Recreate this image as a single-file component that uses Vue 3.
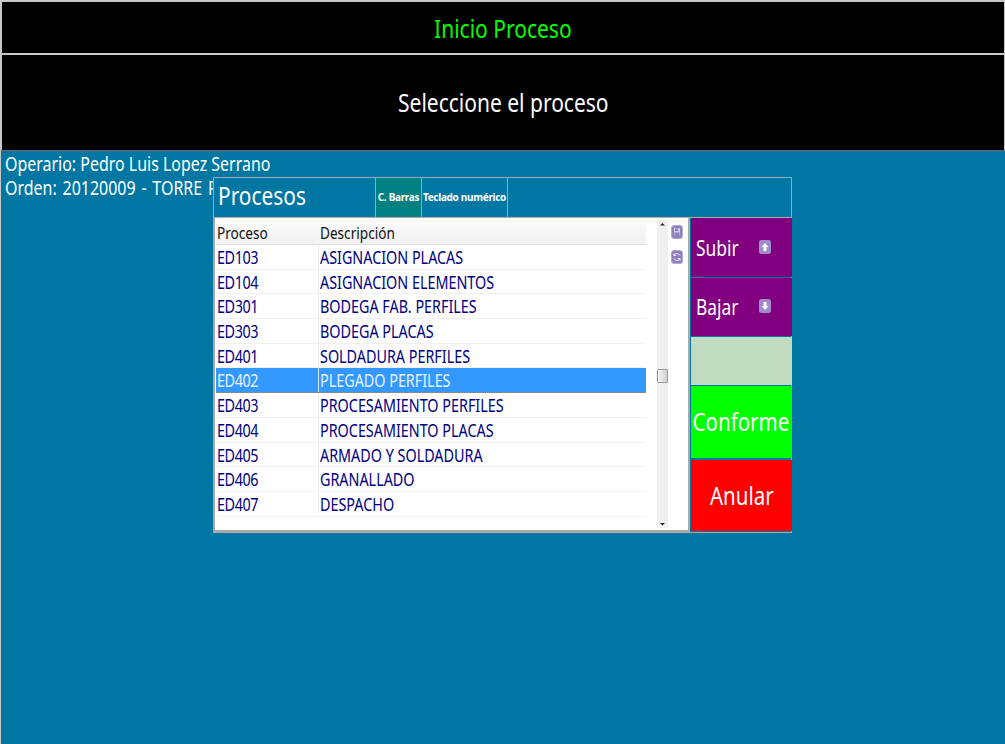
<script setup>
const rows = [
  ['ED103', 'ASIGNACION PLACAS'],
  ['ED104', 'ASIGNACION ELEMENTOS'],
  ['ED301', 'BODEGA FAB. PERFILES'],
  ['ED303', 'BODEGA PLACAS'],
  ['ED401', 'SOLDADURA PERFILES'],
  ['ED402', 'PLEGADO PERFILES'],
  ['ED403', 'PROCESAMIENTO PERFILES'],
  ['ED404', 'PROCESAMIENTO PLACAS'],
  ['ED405', 'ARMADO Y SOLDADURA'],
  ['ED406', 'GRANALLADO'],
  ['ED407', 'DESPACHO'],
]
</script>

<template>
  <div class="screen">
    <header class="title"><span class="t">Inicio Proceso</span></header>
    <div class="prompt"><span class="t">Seleccione el proceso</span></div>
    <main class="body">
      <div class="info"><span class="t">Operario: Pedro Luis Lopez Serrano</span></div>
      <div class="info clip"><span class="t">Orden: 20120009 - TORRE P</span></div>

      <section class="dialog">
        <div class="dialog-head">
          <div class="dialog-title"><span class="t">Procesos</span></div>
          <div class="tab tab-on">C. Barras</div>
          <div class="tab tab-off">Teclado numérico</div>
        </div>
        <div class="dialog-main">
          <div class="panel">
            <div class="table">
              <div class="thead">
                <span class="c1"><span class="t">Proceso</span></span>
                <span class="c2"><span class="t">Descripción</span></span>
              </div>
              <div
                v-for="r in rows"
                :key="r[0]"
                class="row"
                :class="{ selected: r[0] === 'ED402' }"
              >
                <span class="c1"><span class="t">{{ r[0] }}</span></span>
                <span class="c2"><span class="t">{{ r[1] }}</span></span>
              </div>
            </div>
            <div class="scroll">
              <svg class="arrow" width="11" height="8" viewBox="0 0 11 8"><path d="M3 5.500 5.500 3 8 5.500z" fill="#222" /></svg>
              <div class="thumb"></div>
              <svg class="arrow" width="11" height="8" viewBox="0 0 11 8"><path d="M3 3 5.500 5.500 8 3z" fill="#222" /></svg>
            </div>
            <div class="tools">
              <svg width="12" height="14" viewBox="0 0 12 14">
                <rect x=".5" y=".5" width="11" height="13" rx="2.500" fill="#8f7fbd" stroke="#b3a8d6" />
                <path d="M3 3h6v8H3z" fill="#cfc8e6" />
                <path d="M4 3.500h4v2.500H4zM3.500 7.500h5V11h-5z" fill="#8f7fbd" />
                <path d="M7 4h.8v1.500H7z" fill="#fff" />
              </svg>
              <svg width="12" height="14" viewBox="0 0 12 14">
                <rect x=".5" y=".5" width="11" height="13" rx="2.500" fill="#8f7fbd" stroke="#b3a8d6" />
                <path d="M9 5.500A3.500 3.500 0 0 0 3.500 4.500M3 8.500A3.500 3.500 0 0 0 8.500 9.500" fill="none" stroke="#eeeaf8" />
                <path d="M2.500 3v3h3zM9.500 11V8h-3z" fill="#eeeaf8" />
              </svg>
            </div>
          </div>
          <div class="actions">
            <button class="act purple subir">
              <span class="lbl"><span class="t">Subir</span></span>
              <svg width="12" height="14" viewBox="0 0 12 14">
                <rect width="12" height="14" rx="2.500" fill="#a08ccb" />
                <path d="M6 3 9.500 7H7.500V11H4.500V7H2.500z" fill="#fff" />
              </svg>
            </button>
            <button class="act purple bajar">
              <span class="lbl"><span class="t">Bajar</span></span>
              <svg width="12" height="14" viewBox="0 0 12 14">
                <rect width="12" height="14" rx="2.500" fill="#a08ccb" />
                <path d="M6 11 9.500 7H7.500V3H4.500V7H2.500z" fill="#fff" />
              </svg>
            </button>
            <div class="blank"></div>
            <button class="act big green"><span class="t">Conforme</span></button>
            <button class="act big red"><span class="t">Anular</span></button>
          </div>
        </div>
      </section>
    </main>
  </div>
</template>

<style>
html, body { margin: 0; background: #0077a3; }
</style>

<style scoped>
.screen {
  width: 1005px;
  height: 744px;
  box-sizing: border-box;
  display: flex;
  flex-direction: column;
  overflow: hidden;
  padding: 2px 0 0 1px;
  background: #c8c8c8;
  font-family: "Noto Sans", "DejaVu Sans", sans-serif;
}
.t {
  display: inline-block;
  white-space: nowrap;
  transform-origin: left center;
}
.title {
  height: 53px;
  flex: none;
  margin: 0 1px;
  box-sizing: border-box;
  background: #000;
  color: #00ff00;
  font-size: 25px;
  line-height: 52px;
  text-align: center;
  border-bottom: 2px solid #c8c8c8;
}
.title .t, .prompt .t { transform: scaleX(0.84); transform-origin: center; }
.prompt {
  height: 95px;
  flex: none;
  margin: 0 1px;
  background: #000;
  color: #fff;
  font-size: 25px;
  line-height: 95px;
  text-align: center;
}
.body {
  position: relative;
  flex: 1;
  background: #0077a3;
  border-top: 1px solid #666;
  padding: 1px 0 0 4px;
  color: #fff;
  font-size: 19px;
  line-height: 24px;
}
.info { height: 24px; white-space: nowrap; }
.info .t { transform: scaleX(0.84); }
.clip { width: 208px; overflow: hidden; word-spacing: 2px; }
.dialog {
  position: absolute;
  left: 212px;
  top: 26px;
  width: 579px;
  height: 356px;
  box-sizing: border-box;
  display: flex;
  flex-direction: column;
  background: #0077a3;
  border: 1px solid #86aec2;
  border-bottom-color: #aaa;
}
.dialog-head {
  height: 40px;
  flex: none;
  display: flex;
  border-bottom: 1px solid #aaa;
  box-sizing: border-box;
}
.dialog-title {
  width: 161px;
  padding-left: 4px;
  box-sizing: border-box;
  font-size: 25px;
  line-height: 35px;
}
.dialog-title .t { transform: scaleX(0.835); }
.tab {
  box-sizing: border-box;
  height: 39px;
  font-family: "Noto Sans", sans-serif;
  font-size: 10px;
  font-weight: 700;
  line-height: 38px;
  text-align: center;
  white-space: nowrap;
  letter-spacing: -0.3px;
  border-right: 1px solid #86aec2;
}
.tab-on {
  width: 47px;
  background: #008080;
  border-left: 1px solid #86aec2;
}
.tab-off { width: 86px; }
.dialog-main {
  flex: 1;
  display: flex;
  gap: 1px;
  min-height: 0;
}
.panel {
  width: 476px;
  flex: none;
  display: flex;
  background: #fff;
  border-left: 1px solid #aaa;
  border-bottom: 2px solid #aaa;
  border-right: 2px solid #aaa;
  box-sizing: border-box;
}
.table {
  width: 431px;
  flex: none;
  padding: 6px 0 0 1px;
  box-sizing: border-box;
}
.thead {
  height: 20px;
  display: flex;
  background: linear-gradient(#f8f8f8, #f2f2f2);
  border-bottom: 1px solid #ddd;
  color: #111;
  font-size: 17px;
  line-height: 18px;
}
.thead .t { transform: scaleX(0.8); }
.row {
  height: 24.7px;
  box-sizing: border-box;
  display: flex;
  border-bottom: 1px solid #f0f0f0;
  color: #000080;
  font-size: 17.500px;
  line-height: 25px;
}
.row .t { transform: scaleX(0.82); }
.row .c1 { letter-spacing: -0.5px; }
.c1 {
  width: 103px;
  flex: none;
  padding-left: 1px;
  box-sizing: border-box;
  border-right: 1px solid #f0f0f0;
}
.thead .c1 { border-right: 0; }
.c2 { padding-left: 1px; white-space: nowrap; }
.selected {
  background: #3399ff;
  color: #e8f2ff;
  border-bottom: 1px solid #888;
}
.selected .c1 { border-right-color: #cfe6ff; }
.scroll {
  position: relative;
  width: 11px;
  margin-left: 11px;
  margin-top: 2px;
  margin-bottom: 2px;
  flex: none;
  background: #f0f0f0;
  display: flex;
  flex-direction: column;
  justify-content: space-between;
}
.thumb {
  position: absolute;
  left: 0;
  top: 149px;
  width: 11px;
  height: 14px;
  box-sizing: border-box;
  background: linear-gradient(90deg, #f4f4f4, #cfcfcf);
  border: 1px solid #999;
  border-radius: 1px;
}
.arrow { display: block; }
.tools {
  flex: none;
  display: flex;
  flex-direction: column;
  gap: 11px;
  padding: 7px 0 0 3px;
}
.tools svg { display: block; }
.actions {
  width: 101px;
  flex: none;
  display: flex;
  flex-direction: column;
  gap: 1px;
}
.act {
  display: flex;
  align-items: center;
  border: 0;
  padding: 0 0 2px;
  margin: 0;
  color: #fff;
  font-family: inherit;
  box-sizing: border-box;
  white-space: nowrap;
}
.purple {
  height: 59px;
  flex: none;
  background: #800080;
  font-size: 22px;
  padding-left: 5px;
}
.bajar { height: 58px; }
.lbl { width: 63px; text-align: left; }
.purple .t { transform: scaleX(0.79); }
.blank { height: 48px; flex: none; background: #c1dbc0; }
.big {
  justify-content: center;
  font-size: 25px;
}
.big .t { transform: scaleX(0.82); transform-origin: center; }
.green { height: 72px; flex: none; background: #00ff00; padding-right: 2px; }
.red { flex: 1; background: #ff0000; margin: 1px 0; }
</style>
